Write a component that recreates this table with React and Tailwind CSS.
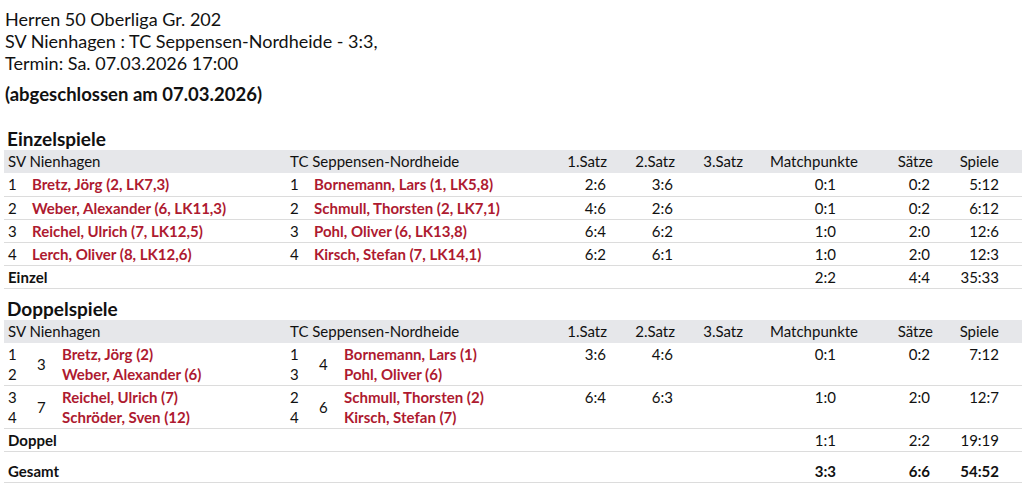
import React from "react";

const red = "text-[#ae1a30]";

const singles = [
    { h: 1, hn: "Bretz, Jörg (2, LK7,3)", g: 1, gn: "Bornemann, Lars (1, LK5,8)", s1: "2:6", s2: "3:6", mp: "0:1", sa: "0:2", sp: "5:12" },
    { h: 2, hn: "Weber, Alexander (6, LK11,3)", g: 2, gn: "Schmull, Thorsten (2, LK7,1)", s1: "4:6", s2: "2:6", mp: "0:1", sa: "0:2", sp: "6:12" },
    { h: 3, hn: "Reichel, Ulrich (7, LK12,5)", g: 3, gn: "Pohl, Oliver (6, LK13,8)", s1: "6:4", s2: "6:2", mp: "1:0", sa: "2:0", sp: "12:6" },
    { h: 4, hn: "Lerch, Oliver (8, LK12,6)", g: 4, gn: "Kirsch, Stefan (7, LK14,1)", s1: "6:2", s2: "6:1", mp: "1:0", sa: "2:0", sp: "12:3" },
];

const doubles = [
    {
        hNums: ["1", "2"], hPair: "3", hNames: ["Bretz, Jörg (2)", "Weber, Alexander (6)"],
        gNums: ["1", "3"], gPair: "4", gNames: ["Bornemann, Lars (1)", "Pohl, Oliver (6)"],
        s1: "3:6", s2: "4:6", mp: "0:1", sa: "0:2", sp: "7:12",
    },
    {
        hNums: ["3", "4"], hPair: "7", hNames: ["Reichel, Ulrich (7)", "Schröder, Sven (12)"],
        gNums: ["2", "4"], gPair: "6", gNames: ["Schmull, Thorsten (2)", "Kirsch, Stefan (7)"],
        s1: "6:4", s2: "6:3", mp: "1:0", sa: "2:0", sp: "12:7",
    },
];

function Cols() {
    return (
        <colgroup>
            <col className="w-[28px]" />
            <col className="w-[254px]" />
            <col className="w-[28px]" />
            <col className="w-[246px]" />
            <col className="w-[52px]" />
            <col className="w-[68px]" />
            <col className="w-[68px]" />
            <col className="w-[116px]" />
            <col className="w-[75px]" />
            <col className="w-[66px]" />
            <col className="w-[17px]" />
        </colgroup>
    );
}

function HeaderRow() {
    return (
        <tr className="bg-[#e6e7ea] h-[23px]">
            <td colSpan={2} className="pl-[4px]">SV Nienhagen</td>
            <td colSpan={2} className="pl-[4px]">TC Seppensen-Nordheide</td>
            <td className="text-right pr-[5px]">1.Satz</td>
            <td className="text-right pr-[5px]">2.Satz</td>
            <td className="text-right pr-[5px]">3.Satz</td>
            <td className="text-right pr-[6px]">Matchpunkte</td>
            <td className="text-right pr-[6px]">Sätze</td>
            <td className="text-right pr-[6px]">Spiele</td>
            <td></td>
        </tr>
    );
}

function Scores({ r }) {
    return (
        <>
            <td className="text-right pr-[6px] pt-[1px]">{r.s1}</td>
            <td className="text-right pr-[7px] pt-[1px]">{r.s2}</td>
            <td></td>
            <td className="text-right pr-[28px] pt-[1px]">{r.mp}</td>
            <td className="text-right pr-[9px] pt-[1px]">{r.sa}</td>
            <td className="text-right pr-[6px] pt-[1px]">{r.sp}</td>
            <td></td>
        </>
    );
}

function SumRow({ label, r, bold, tall }) {
    const pad = tall ? "pt-[9px]" : "pt-[1px]";
    const w = bold ? "font-bold" : "";
    return (
        <tr className={`border-b border-[#dcdcdc] ${tall ? "h-[30px]" : "h-[23px]"}`}>
            <td colSpan={4} className={`pl-[4px] font-bold ${pad}`}>{label}</td>
            <td></td>
            <td></td>
            <td></td>
            <td className={`text-right pr-[28px] ${w} ${pad}`}>{r.mp}</td>
            <td className={`text-right pr-[9px] ${w} ${pad}`}>{r.sa}</td>
            <td className={`text-right pr-[6px] ${w} ${pad}`}>{r.sp}</td>
            <td></td>
        </tr>
    );
}

function PairCell({ pair, names }) {
    return (
        <div className="flex items-center">
            <span className="w-[30px] pl-[5px]">{pair}</span>
            <div className={`flex flex-col font-bold ${red}`}>
                {names.map((n) => (
                    <span key={n}>{n}</span>
                ))}
            </div>
        </div>
    );
}

export default function App() {
    return (
        <div className="font-['Lato',sans-serif] text-[#111] bg-white w-[1024px] h-[495px] overflow-hidden px-[4px] pt-[8px]">
            <div className="text-[18px] leading-[22px] pl-[1px]">
                <p>Herren 50 Oberliga Gr. 202</p>
                <p>SV Nienhagen : TC Seppensen-Nordheide - 3:3,</p>
                <p>Termin: Sa. 07.03.2026 17:00</p>
            </div>
            <p className="text-[18.5px] leading-[22px] font-bold mt-[9px] pl-[1px]">
                (abgeschlossen am 07.03.2026)
            </p>

            <h2 className="text-[19px] leading-[22px] font-bold mt-[23px] pl-[3px]">Einzelspiele</h2>
            <table className="w-[1018px] table-fixed border-collapse text-[15px] leading-[21px]">
                <Cols />
                <tbody>
                    <HeaderRow />
                    {singles.map((r) => (
                        <tr key={r.h} className="border-b border-[#dcdcdc] h-[23px]">
                            <td className="pl-[4px] pt-[1px]">{r.h}</td>
                            <td className={`font-bold pt-[1px] ${red}`}>{r.hn}</td>
                            <td className="pl-[4px] pt-[1px]">{r.g}</td>
                            <td className={`font-bold pt-[1px] ${red}`}>{r.gn}</td>
                            <Scores r={r} />
                        </tr>
                    ))}
                    <SumRow label="Einzel" r={{ mp: "2:2", sa: "4:4", sp: "35:33" }} />
                </tbody>
            </table>

            <h2 className="text-[19px] leading-[22px] font-bold mt-[9px] pl-[3px]">Doppelspiele</h2>
            <table className="w-[1018px] table-fixed border-collapse text-[15px] leading-[21px]">
                <Cols />
                <tbody>
                    <HeaderRow />
                    {doubles.map((r) => (
                        <tr key={r.hPair} className="border-b border-[#dcdcdc] h-[42px] align-top leading-[20.5px]">
                            <td className="pl-[4px] pt-[1px]">
                                {r.hNums.map((n) => (
                                    <div key={n}>{n}</div>
                                ))}
                            </td>
                            <td className="pt-[1px]">
                                <PairCell pair={r.hPair} names={r.hNames} />
                            </td>
                            <td className="pl-[4px] pt-[1px]">
                                {r.gNums.map((n) => (
                                    <div key={n}>{n}</div>
                                ))}
                            </td>
                            <td className="pt-[1px]">
                                <PairCell pair={r.gPair} names={r.gNames} />
                            </td>
                            <td className="text-right pr-[6px] pt-[1px]">{r.s1}</td>
                            <td className="text-right pr-[7px] pt-[1px]">{r.s2}</td>
                            <td></td>
                            <td className="text-right pr-[28px] pt-[1px]">{r.mp}</td>
                            <td className="text-right pr-[9px] pt-[1px]">{r.sa}</td>
                            <td className="text-right pr-[6px] pt-[1px]">{r.sp}</td>
                            <td></td>
                        </tr>
                    ))}
                    <SumRow label="Doppel" r={{ mp: "1:1", sa: "2:2", sp: "19:19" }} />
                    <SumRow label="Gesamt" r={{ mp: "3:3", sa: "6:6", sp: "54:52" }} bold tall />
                </tbody>
            </table>
        </div>
    );
}
